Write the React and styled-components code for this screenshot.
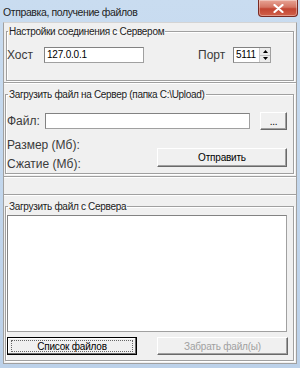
import React from "react";
import styled, { createGlobalStyle } from "styled-components";

const GlobalStyle = createGlobalStyle`
  html, body {
    margin: 0;
    padding: 0;
    background: #c3d6ec;
  }
  * {
    box-sizing: border-box;
  }
`;

const Window = styled.div`
  width: 300px;
  height: 368px;
  display: flex;
  flex-direction: column;
  background: linear-gradient(to bottom, #c9dcf0, #bcd1e9);
  font-family: "Liberation Sans", Arial, sans-serif;
  color: #000;
  overflow: hidden;
`;

const TitleBar = styled.div`
  height: 22px;
  flex: none;
  display: flex;
  justify-content: space-between;
  align-items: flex-start;
`;

const Title = styled.span`
  margin: 6px 0 0 3px;
  font-size: 10.5px;
  letter-spacing: -0.4px;
  color: #1e1e1e;
`;

const CloseButton = styled.div`
  width: 40px;
  height: 17px;
  margin-right: 2px;
  border: 1px solid #7a2a22;
  border-top: none;
  border-radius: 0 0 4px 4px;
  background: linear-gradient(to bottom, #e8a495 0%, #d47563 45%, #c24532 55%, #d1614a 100%);
  display: flex;
  align-items: center;
  justify-content: center;
  box-shadow: inset 0 0 0 1px rgba(255, 255, 255, 0.35);
`;

const Client = styled.div`
  flex: 1;
  margin: 0 3px 4px 3px;
  background: #f0f0f0;
  border: 1px solid #a0a0a0;
  border-top-color: #d4d4d4;
  display: flex;
  flex-direction: column;
`;

const Panel = styled.div`
  flex: none;
  height: ${(p) => p.h}px;
  padding: ${(p) => p.pad || "0 1px"};
  display: flex;
  flex-direction: column;
`;

const Bevel = styled.div`
  flex: none;
  height: 2px;
  border-top: 1px solid #a0a0a0;
  border-bottom: 1px solid #ffffff;
`;

const Group = styled.fieldset`
  margin: 0;
  height: ${(p) => p.h}px;
  padding: ${(p) => p.pad};
  border: 1px solid #a0a0a0;
  box-shadow: inset 1px 1px 0 #fff, 1px 1px 0 #fff;
  display: flex;
  flex-direction: column;
  min-width: 0;
`;

const Caption = styled.legend`
  margin-left: 1px;
  padding: 0 1px;
  font-size: 10px;
  line-height: 13px;
  letter-spacing: -0.3px;
  color: #222;
`;

const Row = styled.div`
  display: flex;
  align-items: center;
  height: ${(p) => p.h}px;
`;

const Label = styled.span`
  flex: none;
  width: ${(p) => p.w}px;
  margin-left: ${(p) => p.ml || 0}px;
  font-size: 12px;
  color: #3a3a3a;
  white-space: nowrap;
`;

const Edit = styled.div`
  flex: none;
  width: ${(p) => p.w}px;
  height: 16px;
  background: #fff;
  border: 1px solid #a0a0a0;
  border-top-color: #828282;
  border-left-color: #828282;
  font-size: 10px;
  line-height: 14px;
  padding-left: 2px;
  letter-spacing: -0.2px;
`;

const Spin = styled.div`
  flex: none;
  width: 38px;
  height: 16px;
  background: #fff;
  border: 1px solid #828282;
  border-right-color: #a0a0a0;
  border-bottom-color: #a0a0a0;
  display: flex;
  font-size: 10px;
  line-height: 14px;
  letter-spacing: -0.2px;
`;

const SpinValue = styled.span`
  flex: 1;
  padding-left: 2px;
`;

const SpinArrows = styled.div`
  width: 11px;
  display: flex;
  flex-direction: column;
  background: #ececec;
  border-left: 1px solid #c8c8c8;
`;

const Arrow = styled.div`
  flex: 1;
  display: flex;
  align-items: center;
  justify-content: center;
  border-bottom: ${(p) => (p.top ? "1px solid #c0c0c0" : "none")};
`;

const Button = styled.div`
  flex: none;
  width: ${(p) => p.w}px;
  height: ${(p) => p.h || 19}px;
  margin-left: ${(p) => p.ml || 0}px;
  display: flex;
  align-items: center;
  justify-content: center;
  background: #f0f0f0;
  font-size: 10px;
  letter-spacing: -0.2px;
  color: ${(p) => (p.disabled ? "#a0a0a0" : "#000")};
  border: 1px solid;
  border-color: ${(p) =>
    p.primary ? "#000" : "#ffffff #696969 #696969 #ffffff"};
  box-shadow: ${(p) =>
    p.primary
      ? "inset -1px -1px 0 #696969, inset 1px 1px 0 #fff"
      : "inset -1px -1px 0 #a0a0a0"};
  position: relative;
`;

const Focus = styled.span`
  position: absolute;
  inset: 2px 3px;
  border: 1px dotted #666;
`;

const SendGrid = styled.div`
  display: grid;
  grid-template-columns: 150px 130px;
  grid-template-rows: 19px 19px;
  align-items: center;
  margin-top: 5px;
`;

const SendButton = styled(Button)`
  grid-column: 2;
  grid-row: 1 / 3;
  align-self: end;
  margin-bottom: 6px;
`;

const ListBox = styled.div`
  flex: none;
  width: 280px;
  height: 117px;
  margin-top: 1px;
  background: #fff;
  border: 1px solid #a0a0a0;
  border-top-color: #828282;
  border-left-color: #828282;
`;

const ButtonRow = styled.div`
  display: flex;
  margin-top: 5px;
`;

const Strip = styled.div`
  flex: none;
  height: 16px;
  background: #f0f0f0;
`;

const Tri = ({ up }) => (
  <svg width="5" height="3" viewBox="0 0 5 3">
    <path d={up ? "M2.5 0L5 3H0z" : "M0 0H5L2.5 3z"} fill="#000" />
  </svg>
);

export default function App() {
  return (
    <>
      <GlobalStyle />
      <Window>
        <TitleBar>
          <Title>Отправка, получение файлов</Title>
          <CloseButton>
            <svg width="11" height="9" viewBox="0 0 11 9">
              <path
                d="M1.5 1L9.5 8M9.5 1L1.5 8"
                stroke="#fff"
                strokeWidth="2.2"
                strokeLinecap="round"
              />
            </svg>
          </CloseButton>
        </TitleBar>
        <Client>
          <Panel h={59} pad="2px 2px 0 2px">
            <Group h={56} pad="9px 0 0 0">
              <Caption>Настройки соединения с Сервером</Caption>
              <Row h={16}>
                <Label w={37}>Хост</Label>
                <Edit w={100}>127.0.0.1</Edit>
                <Label w={35} ml={54}>Порт</Label>
                <Spin>
                  <SpinValue>5111</SpinValue>
                  <SpinArrows>
                    <Arrow top>
                      <Tri up />
                    </Arrow>
                    <Arrow>
                      <Tri />
                    </Arrow>
                  </SpinArrows>
                </Spin>
              </Row>
            </Group>
          </Panel>
          <Bevel />
          <Panel h={92} pad="4px 2px 0 1px">
            <Group h={86} pad="11px 0 0 1px">
              <Caption>Загрузить файл на Сервер (папка C:\Upload)</Caption>
              <Row h={18}>
                <Label w={38}>Файл:</Label>
                <Edit w={205} />
                <Button w={27} h={18} ml={10}>...</Button>
              </Row>
              <SendGrid>
                <Label w={150}>Размер (Мб):</Label>
                <Label w={150}>Сжатие (Мб):</Label>
                <SendButton w={130}>Отправить</SendButton>
              </SendGrid>
            </Group>
          </Panel>
          <Bevel />
          <Strip />
          <Bevel />
          <Panel h={166} pad="4px 2px 0 1px">
            <Group h={161} pad="1px 0 0 1px">
              <Caption>Загрузить файл с Сервера</Caption>
              <ListBox />
              <ButtonRow>
                <Button w={130} h={18} primary>
                  <Focus />
                  Список файлов
                </Button>
                <Button w={131} h={18} ml={20} disabled>
                  Забрать файл(ы)
                </Button>
              </ButtonRow>
            </Group>
          </Panel>
        </Client>
      </Window>
    </>
  );
}
